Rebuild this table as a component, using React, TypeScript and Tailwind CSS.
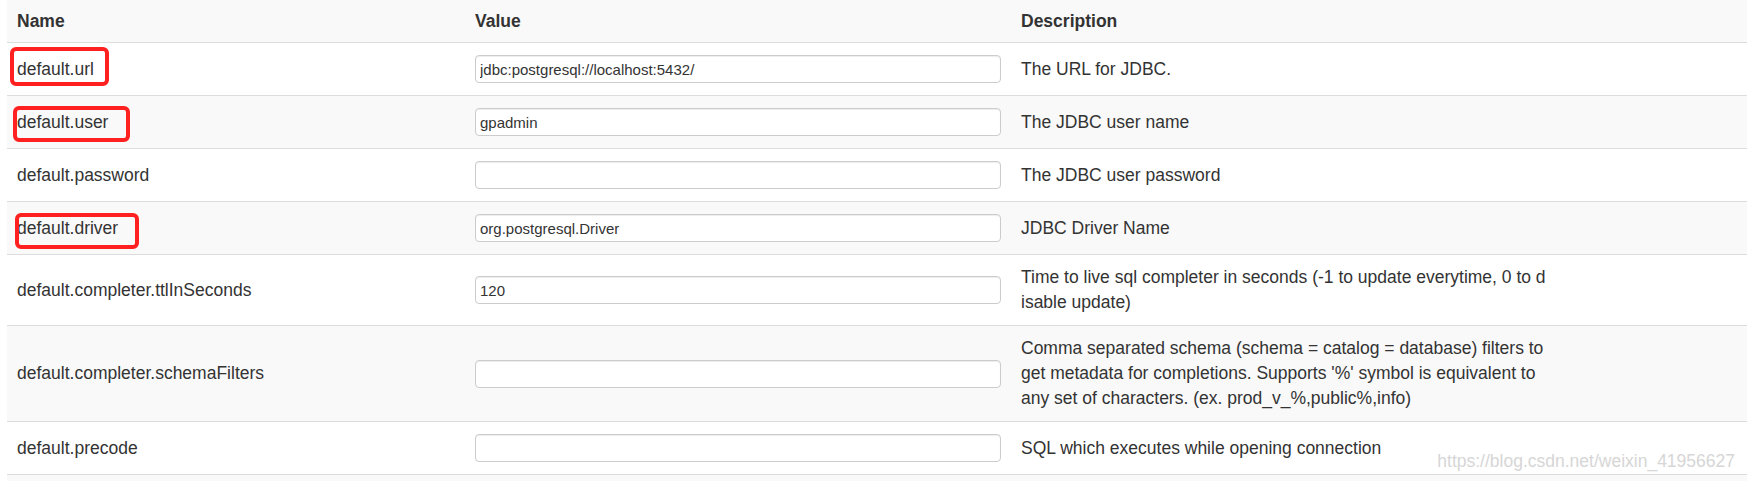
import React from "react";

type Prop = {
  name: string;
  value: string;
  desc: string;
  mark?: string;
};

const props: Prop[] = [
  {
    name: "default.url",
    value: "jdbc:postgresql://localhost:5432/",
    desc: "The URL for JDBC.",
    mark: "left-[3px] top-[4px] w-[99px] h-[39px]",
  },
  {
    name: "default.user",
    value: "gpadmin",
    desc: "The JDBC user name",
    mark: "left-[6px] top-[10px] w-[117px] h-[36px]",
  },
  { name: "default.password", value: "", desc: "The JDBC user password" },
  {
    name: "default.driver",
    value: "org.postgresql.Driver",
    desc: "JDBC Driver Name",
    mark: "left-[8px] top-[11px] w-[124px] h-[36px]",
  },
  {
    name: "default.completer.ttlInSeconds",
    value: "120",
    desc: "Time to live sql completer in seconds (-1 to update everytime, 0 to disable update)",
  },
  {
    name: "default.completer.schemaFilters",
    value: "",
    desc: "Comma separated schema (schema = catalog = database) filters to get metadata for completions. Supports '%' symbol is equivalent to any set of characters. (ex. prod_v_%,public%,info)",
  },
  { name: "default.precode", value: "", desc: "SQL which executes while opening connection" },
];

const App = () => {
  return (
    <div className="relative w-[1747px] h-[481px] overflow-hidden bg-white pl-[7px] font-['Liberation_Sans',Arial,sans-serif] text-[17.5px] leading-[25px] text-[#333]">
      <div className="w-[1740px]">
        <div className="grid grid-cols-[458px_546px_736px] h-[42px] items-center bg-[#f9f9f9] font-bold">
          <div className="px-[10px]">Name</div>
          <div className="px-[10px]">Value</div>
          <div className="px-[10px]">Description</div>
        </div>

        {props.map((p, i) => (
          <div
            key={p.name}
            className={
              "relative grid grid-cols-[458px_546px_736px] items-center border-t border-[#ddd] py-[10px] " +
              (i % 2 === 1 ? "bg-[#f9f9f9]" : "bg-white")
            }
          >
            {p.mark && (
              <div className={"absolute border-[4px] border-[#ff2020] rounded-[6px] " + p.mark}></div>
            )}
            <div className="px-[10px]">{p.name}</div>
            <div className="px-[10px] py-[2px]">
              <input
                readOnly
                value={p.value}
                className="block w-full h-[28px] rounded-[4px] border border-[#ccc] bg-white px-[4px] text-[15px] text-[#333] shadow-[inset_0_1px_1px_rgba(0,0,0,0.075)] outline-none"
              />
            </div>
            <div className="px-[10px]">
              <div className="w-[527px] break-all">{p.desc}</div>
            </div>
          </div>
        ))}

        <div className="h-[10px] border-t border-[#ddd] bg-[#f9f9f9]"></div>
      </div>

      <div className="absolute right-[12px] top-[450px] text-[17.5px] leading-[22px] text-[#d6d6d6]">
        https://blog.csdn.net/weixin_41956627
      </div>
    </div>
  );
};

export default App;
